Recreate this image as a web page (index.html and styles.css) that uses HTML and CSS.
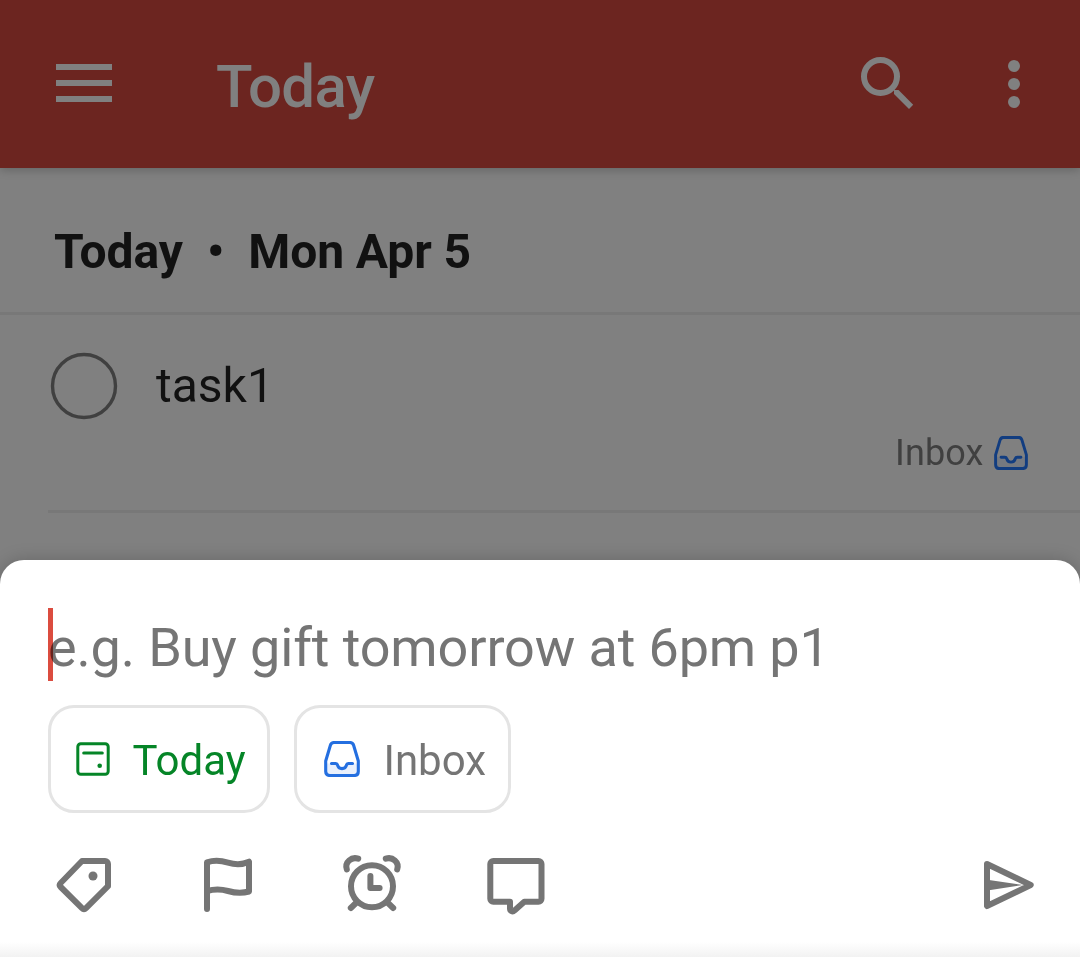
FILE: index.html
```html
<!DOCTYPE html>
<html lang="en">
<head>
<meta charset="utf-8">
<title>Today</title>
<link rel="stylesheet" href="styles.css">
</head>
<body>
<svg class="defs" aria-hidden="true">
  <symbol id="inbox" viewBox="0 0 36 36">
    <path d="M1.500 22.500H12q1.500 0 2 1.500a4.200 4.200 0 0 0 8 0q.5-1.500 2-1.500H34.500V31q0 3.500-3.500 3.500H5q-3.500 0-3.500-3.500z" fill="currentColor" opacity=".1"/>
    <path d="M10 1.500h16q2.800 0 3.600 2.800L34.300 20V30.500q0 4-4 4H5.700q-4 0-4-4V20L6.400 4.300Q7.200 1.500 10 1.500zM7.500 22.500H11.500q1.500 0 2 1.500a4.600 4.600 0 0 0 9 0q.5-1.500 2-1.500H28.500" fill="none" stroke="currentColor" stroke-width="3.100" stroke-linecap="round" stroke-linejoin="round"/>
  </symbol>
</svg>
<div class="screen">
  <header class="bar">
    <svg class="bar-icon" viewBox="48 48 72 72"><path d="M56 64h56v6H56zM56 80h56v6H56zM56 96h56v6H56z" fill="currentColor"/></svg>
    <h1 class="title">Today</h1>
    <svg class="bar-icon" viewBox="852 48 72 72"><circle cx="880.500" cy="76.500" r="16.500" fill="none" stroke="currentColor" stroke-width="6"/><path d="M894 90h4.500L913.200 104.800 909 109 894 94z" fill="currentColor"/></svg>
    <svg class="bar-icon more" viewBox="978 48 72 72"><g fill="currentColor"><circle cx="1014" cy="66" r="6"/><circle cx="1014" cy="84" r="6"/><circle cx="1014" cy="102" r="6"/></g></svg>
  </header>
  <main class="list">
    <h2 class="day"><span>Today</span><span class="dot">•</span><span>Mon Apr 5</span></h2>
    <div class="task">
      <svg class="check" viewBox="0 0 68 68"><circle cx="34" cy="34" r="31.500" fill="none" stroke="currentColor" stroke-width="3.400"/></svg>
      <span class="task-name">task1</span>
      <span class="project">Inbox<svg class="project-icon"><use href="#inbox"/></svg></span>
    </div>
  </main>
  <section class="sheet">
    <div class="entry"><span class="hint">e.g. Buy gift tomorrow at 6pm p1</span><span class="caret"></span></div>
    <div class="chips">
      <button class="chip today">
        <svg class="chip-icon" viewBox="75 741 36 36" fill="none" stroke="currentColor" stroke-width="3"><rect x="77.800" y="743.800" width="30.400" height="30.400" rx="3"/><path d="M83.700 753H102.300" stroke-width="3" stroke-linecap="round"/><circle cx="99.700" cy="765.700" r="2.300" fill="currentColor" stroke="none"/></svg>
        <span class="chip-text">Today</span>
      </button>
      <button class="chip inbox">
        <svg class="chip-icon"><use href="#inbox"/></svg>
        <span class="chip-text">Inbox</span>
      </button>
    </div>
    <div class="tools">
      <svg class="tool" viewBox="48 849 72 72"><path d="M82 861H105a3 3 0 0 1 3 3V886.200L86 908.200q-2 2-4 0L60.700 887q-2-2 0-4z"/><circle class="solid" cx="93" cy="876" r="4.500"/></svg>
      <svg class="tool" viewBox="192 849 72 72"><path d="M207 909V862.300C214 860 221 860.500 228 862.600S243 864.500 249 861.700V891.500C242 893.500 235 893 228 891S214 889 207 891"/></svg>
      <svg class="tool" viewBox="336 849 72 72"><circle cx="372" cy="886.300" r="21"/><path d="M370.400 876V888H379.600M346.800 869.300C344.500 862 351.500 856.500 358.200 858.700M397.200 869.300C399.500 862 392.500 856.500 385.800 858.700M350.800 908L356 903M393.200 908L388 903"/></svg>
      <svg class="tool" viewBox="480 849 72 72"><path d="M493.300 861H538.500a3 3 0 0 1 3 3V898.800a3 3 0 0 1-3 3H524.300L514.500 910.500C512.500 912.500 510 911 510 908.500V901.800H493.300a3 3 0 0 1-3-3V864a3 3 0 0 1 3-3z"/></svg>
      <svg class="tool send" viewBox="972 849 72 72"><path d="M987 864L1030.700 885 987 906z"/><path class="solid" d="M989 880L1023 885 989 890.300z"/></svg>
    </div>
  </section>
</div>
</body>
</html>
```
FILE: styles.css
```css
* { box-sizing: border-box; }
body { margin: 0; font-family: Roboto, "Liberation Sans", sans-serif; }
.defs { position: absolute; width: 0; height: 0; }
.screen { width: 1080px; height: 957px; overflow: hidden; display: flex; flex-direction: column; background: #808080; }
.bar {
  position: relative; height: 168px; flex: none; padding: 0 30px 0 48px;
  display: flex; align-items: center;
  background: #6c2520; color: #808080; box-shadow: 0 2px 9px rgba(0, 0, 0, .22);
}
.bar-icon { width: 72px; height: 72px; flex: none; }
.more { margin-left: 54px; }
.title { flex: 1; margin: 5px 0 0 96px; font-size: 60px; line-height: 72px; font-weight: 500; letter-spacing: -.6px; }
.list { height: 392px; flex: none; color: #111; }
.day {
  height: 147px; margin: 0; padding: 48px 54px 0; border-bottom: 3px solid #787878;
  display: flex; font-size: 48px; line-height: 71px; font-weight: 700; letter-spacing: -.1px;
}
.dot { width: 65.500px; text-align: center; }
.task {
  position: relative; height: 198px; margin-left: 48px; padding: 37px 52px 0 2px;
  border-bottom: 3px solid #787878; display: grid; grid-template: 68px 1fr / 106px 1fr;
}
.check { width: 68px; height: 68px; color: #404040; }
.task-name { font-size: 48px; line-height: 67px; }
.project {
  grid-column: 1 / 3; justify-self: end; height: 34px; margin-top: 16px;
  display: flex; align-items: center; gap: 10.500px; color: #404040; font-size: 36px; line-height: 34px; letter-spacing: .1px;
}
.project-icon { width: 34px; height: 34px; color: #123d80; }
.sheet {
  position: relative; flex: 1; padding: 48px 36px 0 48px; border-radius: 24px 24px 0 0;
  background: linear-gradient(to bottom, #fff calc(100% - 15px), #f2f2f2);
  box-shadow: 0 0 18px rgba(0, 0, 0, .2);
}
.entry { position: relative; height: 73px; font-size: 54px; line-height: 79px; color: #757575; white-space: nowrap; letter-spacing: -.13px; }
.caret { position: absolute; left: 0; top: 0; width: 5px; height: 73px; background: #db4c3f; mix-blend-mode: multiply; }
.chips { display: flex; gap: 24px; margin-top: 24px; }
.chip {
  height: 108px; padding: 0 21px 0 24px; border: 3px solid #e4e4e4; border-radius: 26px; background: #fff;
  display: flex; align-items: center; font-family: inherit; font-size: 42px; line-height: 50px;
}
.chip.today { width: 222px; color: #058527; }
.chip.inbox { width: 217px; padding-left: 27px; color: #757575; }
.chip-icon { width: 36px; height: 36px; flex: none; margin-right: 21.500px; }
.inbox .chip-icon { color: #246fe0; margin-right: 23.500px; }
.chip-text { margin-top: 3px; }
.tools { display: flex; gap: 72px; margin-top: 36px; }
.tool { width: 72px; height: 72px; color: #757575; fill: none; stroke: currentColor; stroke-width: 6; stroke-linecap: round; stroke-linejoin: round; }
.solid { fill: currentColor; stroke: none; }
.send { margin-left: auto; }
```
